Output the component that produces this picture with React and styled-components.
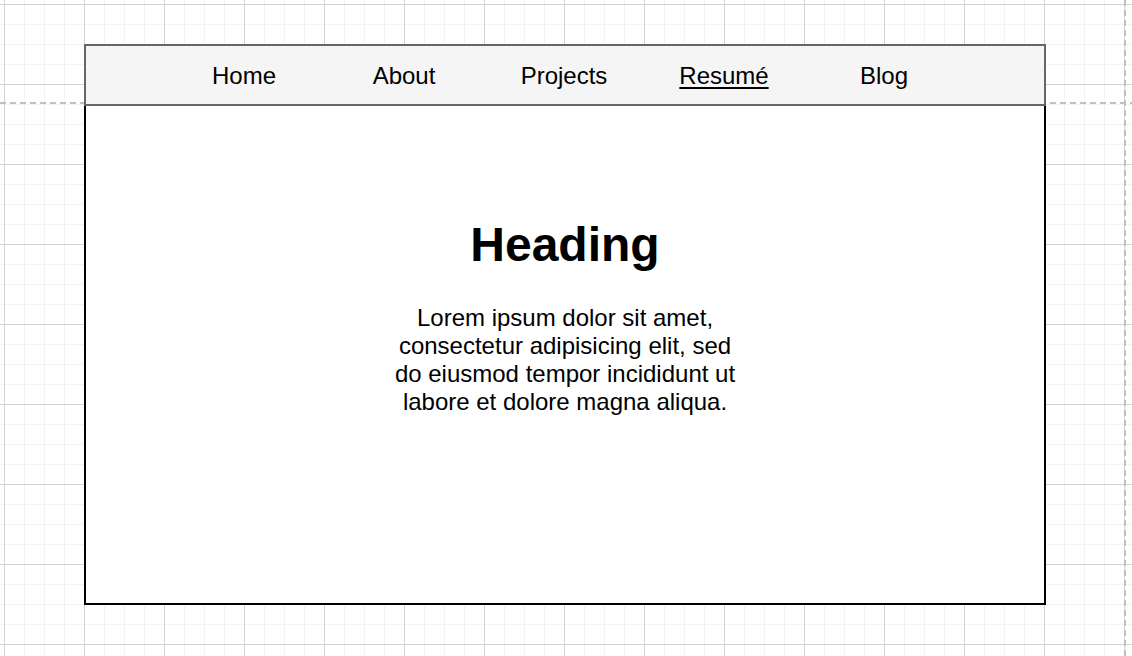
import React from "react"
import styled, { createGlobalStyle } from "styled-components"

const GlobalStyle = createGlobalStyle`
    html, body {
        margin: 0;
        padding: 0;
    }
    html {
        min-height: 100%;
        background-color: #fff;
        background-image:
            linear-gradient(to right, #c0c0c0 0 6px, transparent 6px 10px),
            linear-gradient(to bottom, #c0c0c0 0 6px, transparent 6px 10px),
            linear-gradient(to right, #d2d2d2 1px, transparent 1px),
            linear-gradient(to bottom, #d2d2d2 1px, transparent 1px),
            linear-gradient(to right, #f3f3f3 1px, transparent 1px),
            linear-gradient(to bottom, #f3f3f3 1px, transparent 1px);
        background-size: 10px 2px, 2px 10px, 80px 80px, 80px 80px, 20px 20px, 20px 20px;
        background-position: 0 102px, 1124px 0, 4px 4px, 4px 4px, 4px 4px, 4px 4px;
        background-repeat: repeat-x, repeat-y, repeat, repeat, repeat, repeat;
    }
    body {
        font-family: "Liberation Sans", Arial, Helvetica, sans-serif;
        color: #000;
    }
`

const Frame = styled.div`
    width: 962px;
    margin: 44px 0 0 84px;
`

const NavBar = styled.nav`
    box-sizing: border-box;
    height: 62px;
    border: 2px solid #666;
    background-color: #f5f5f5;
    display: flex;
    align-items: center;
    justify-content: center;
    padding: 2px 2px 0 0;
`

const NavItem = styled.a`
    width: 160px;
    text-align: center;
    font-size: 24px;
    line-height: 28px;
    color: #000;
    text-decoration: ${(props) => (props.active ? "underline" : "none")};
    text-underline-offset: 3px;
    text-decoration-thickness: 2px;
`

const Content = styled.main`
    box-sizing: border-box;
    height: 499px;
    border: 2px solid #000;
    border-top: none;
    background-color: #fff;
    display: flex;
    flex-direction: column;
    align-items: center;
    padding-top: 111px;
`

const Heading = styled.h1`
    margin: 0;
    font-size: 48px;
    line-height: 56px;
    font-weight: bold;
`

const Body = styled.p`
    margin: 31px 0 0;
    max-width: 350px;
    text-align: center;
    font-size: 24px;
    line-height: 28px;
`

const links = ["Home", "About", "Projects", "Resumé", "Blog"]

const App = () => {
    return (
        <>
            <GlobalStyle />
            <Frame>
                <NavBar>
                    {links.map((l) => (
                        <NavItem key={l} active={l === "Resumé"}>{l}</NavItem>
                    ))}
                </NavBar>
                <Content>
                    <Heading>Heading</Heading>
                    <Body>
                        Lorem ipsum dolor sit amet, consectetur adipisicing elit, sed do eiusmod tempor incididunt ut labore et dolore magna aliqua.
                    </Body>
                </Content>
            </Frame>
        </>
    )
}

export default App
